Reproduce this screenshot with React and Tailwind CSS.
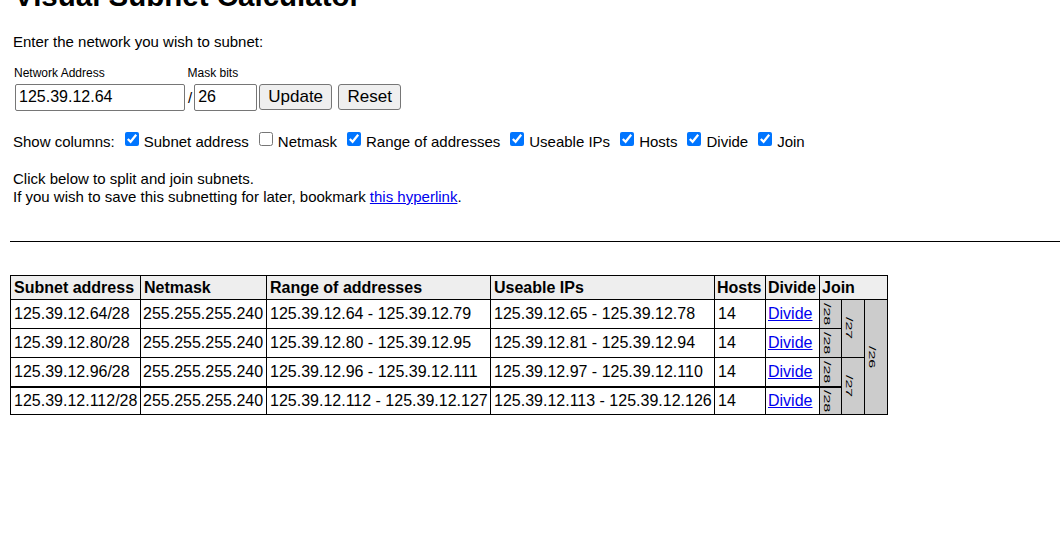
import React from 'react';

const rows = [
  {
    subnet: '125.39.12.64/28',
    mask: '255.255.255.240',
    range: '125.39.12.64 - 125.39.12.79',
    useable: '125.39.12.65 - 125.39.12.78',
    hosts: '14',
    join: [
      { label: '/28', span: 1 },
      { label: '/27', span: 2 },
      { label: '/26', span: 4 },
    ],
  },
  {
    subnet: '125.39.12.80/28',
    mask: '255.255.255.240',
    range: '125.39.12.80 - 125.39.12.95',
    useable: '125.39.12.81 - 125.39.12.94',
    hosts: '14',
    join: [{ label: '/28', span: 1 }],
  },
  {
    subnet: '125.39.12.96/28',
    mask: '255.255.255.240',
    range: '125.39.12.96 - 125.39.12.111',
    useable: '125.39.12.97 - 125.39.12.110',
    hosts: '14',
    join: [
      { label: '/28', span: 1 },
      { label: '/27', span: 2 },
    ],
  },
  {
    subnet: '125.39.12.112/28',
    mask: '255.255.255.240',
    range: '125.39.12.112 - 125.39.12.127',
    useable: '125.39.12.113 - 125.39.12.126',
    hosts: '14',
    join: [{ label: '/28', span: 1 }],
  },
];

const columns = [
  ['Subnet address', true],
  ['Netmask', false],
  ['Range of addresses', true],
  ['Useable IPs', true],
  ['Hosts', true],
  ['Divide', true],
  ['Join', true],
];

const App = () => {
  return (
    <div className="min-h-screen bg-white text-black font-['Liberation_Sans',Arial,sans-serif] text-[15px] leading-[17.25px] overflow-hidden">
      {/* page header, scrolled slightly out of view */}
      <h1 className="-mt-[21px] ml-[14px] text-[29.5px] leading-[34px] font-bold whitespace-nowrap">Visual Subnet Calculator</h1>

      <p className="mt-[20px] ml-[13px]">Enter the network you wish to subnet:</p>

      {/* network form */}
      <div className="mt-[16px] ml-[14px] flex">
        <div className="w-[173.5px]">
          <div className="text-[12px] leading-[14px]">Network Address</div>
          <div className="mt-[3px] ml-[1px] flex items-center h-[28px]">
            <input
              type="text"
              defaultValue="125.39.12.64"
              className="w-[170px] h-[27px] border border-[#767676] rounded-[2px] pl-[3px] text-[16px] bg-white outline-none"
            />
          </div>
        </div>
        <div>
          <div className="text-[12px] leading-[14px]">Mask bits</div>
          <div className="mt-[3px] flex items-center h-[28px]">
            <span className="ml-[0.5px] mr-[2px]">/</span>
            <input
              type="text"
              defaultValue="26"
              className="w-[63px] h-[27px] border border-[#767676] rounded-[2px] pl-[3px] text-[16px] bg-white outline-none"
            />
            <button className="ml-[2px] w-[73px] h-[26px] bg-[#efefef] border border-[#767676] rounded-[3px] text-[17px] leading-[20px]">
              Update
            </button>
            <button className="ml-[6px] w-[63px] h-[26px] bg-[#efefef] border border-[#767676] rounded-[3px] text-[17px] leading-[20px]">
              Reset
            </button>
          </div>
        </div>
      </div>

      {/* column toggles */}
      <div className="mt-[22px] ml-[13px] flex items-start h-[17px] whitespace-nowrap">
        <span>Show columns:</span>
        {columns.map(([name, checked]) => (
          <label key={name} className="flex items-start">
            <input
              type="checkbox"
              defaultChecked={checked}
              className="ml-[10px] mr-[5px] -mt-[1.5px] w-[14px] h-[14px]"
            />
            <span>{name}</span>
          </label>
        ))}
      </div>

      <p className="mt-[20px] ml-[13px] leading-[17.4px]">
        Click below to split and join subnets.
        <br />
        If you wish to save this subnetting for later, bookmark{' '}
        <a href="#" className="text-[#0000ee] underline">this hyperlink</a>.
      </p>

      <div className="mt-[36px] ml-[10px] h-px bg-black" />

      {/* subnet table */}
      <table className="mt-[33px] ml-[10px] w-[877px] table-fixed border-collapse text-[16px] leading-[18px]">
        <colgroup>
          <col className="w-[130px]" />
          <col className="w-[126px]" />
          <col className="w-[224px]" />
          <col className="w-[224px]" />
          <col className="w-[51px]" />
          <col className="w-[54px]" />
          <col className="w-[22px]" />
          <col className="w-[23px]" />
          <col className="w-[23px]" />
        </colgroup>
        <thead>
          <tr className="h-[24px] bg-[#eeeeee]">
            <th className="border border-black px-[3px] text-left font-bold whitespace-nowrap">Subnet address</th>
            <th className="border border-black px-[3px] text-left font-bold">Netmask</th>
            <th className="border border-black px-[3px] text-left font-bold">Range of addresses</th>
            <th className="border border-black px-[3px] text-left font-bold">Useable IPs</th>
            <th className="border border-black px-[2px] text-left font-bold">Hosts</th>
            <th className="border border-black px-[2px] text-left font-bold">Divide</th>
            <th colSpan={3} className="border border-black px-[2px] text-left font-bold">Join</th>
          </tr>
        </thead>
        <tbody>
          {rows.map((row, i) => {
            const edge = i === 3 ? 'border border-black border-t-2' : 'border border-black';
            return (
              <tr key={row.subnet} className={i === 3 ? 'h-[28px]' : 'h-[29px]'}>
                <td className={`${edge} px-[3px] whitespace-nowrap`}>{row.subnet}</td>
                <td className={`${edge} px-[2px] whitespace-nowrap`}>{row.mask}</td>
                <td className={`${edge} px-[3px] whitespace-nowrap`}>{row.range}</td>
                <td className={`${edge} px-[3px] whitespace-nowrap`}>{row.useable}</td>
                <td className={`${edge} px-[3px]`}>{row.hosts}</td>
                <td className={`${edge} px-[2px]`}>
                  <a href="#" className="text-[#0000ee] underline">Divide</a>
                </td>
                {row.join.map((j) => (
                  <td
                    key={j.label}
                    rowSpan={j.span}
                    className={`${j.span === 1 ? edge : 'border border-black'} bg-[#cccccc] pl-[2px] p-0`}
                  >
                    <div className="[writing-mode:vertical-rl] text-[16px] leading-[18px] text-black origin-left scale-x-[0.58]">
                      {j.label}
                    </div>
                  </td>
                ))}
              </tr>
            );
          })}
        </tbody>
      </table>
    </div>
  );
};

export default App;
